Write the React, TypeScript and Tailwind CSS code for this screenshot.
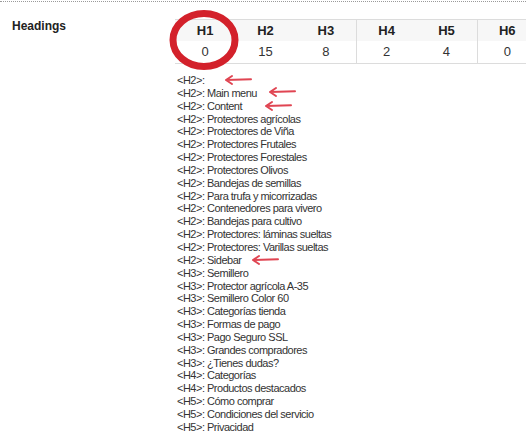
import React from "react";

const lines: string[] = [
  "<H2>: ",
  "<H2>: Main menu",
  "<H2>: Content",
  "<H2>: Protectores agrícolas",
  "<H2>: Protectores de Viña",
  "<H2>: Protectores Frutales",
  "<H2>: Protectores Forestales",
  "<H2>: Protectores Olivos",
  "<H2>: Bandejas de semillas",
  "<H2>: Para trufa y micorrizadas",
  "<H2>: Contenedores para vivero",
  "<H2>: Bandejas para cultivo",
  "<H2>: Protectores: láminas sueltas",
  "<H2>: Protectores: Varillas sueltas",
  "<H2>: Sidebar",
  "<H3>: Semillero",
  "<H3>: Protector agrícola A-35",
  "<H3>: Semillero Color 60",
  "<H3>: Categorías tienda",
  "<H3>: Formas de pago",
  "<H3>: Pago Seguro SSL",
  "<H3>: Grandes compradores",
  "<H3>: ¿Tienes dudas?",
  "<H4>: Categorías",
  "<H4>: Productos destacados",
  "<H5>: Cómo comprar",
  "<H5>: Condiciones del servicio",
  "<H5>: Privacidad",
];

const cols = [
  { h: "H1", v: "0", sep: false },
  { h: "H2", v: "15", sep: false },
  { h: "H3", v: "8", sep: false },
  { h: "H4", v: "2", sep: true },
  { h: "H5", v: "4", sep: false },
  { h: "H6", v: "0", sep: true },
];

function Arrow({ left, top }: { left: number; top: number }) {
  return (
    <svg
      className="absolute"
      style={{ left, top }}
      width="30"
      height="12"
      viewBox="0 0 30 12"
    >
      <path
        d="M2 6 L27 5.2 M8 2 L2 6 L8 10"
        fill="none"
        stroke="#e04552"
        strokeWidth="2"
        strokeLinecap="round"
        strokeLinejoin="round"
      />
    </svg>
  );
}

export default function App() {
  return (
    <div
      className="relative w-[526px] h-[435px] overflow-hidden bg-white text-[#333]"
      style={{ fontFamily: '"Liberation Sans", Arial, sans-serif' }}
    >
      <div className="border-t border-dotted border-[#9a9a9a] mt-[1px]" />
      <div className="flex">
        <div className="w-[175px] shrink-0 pl-[12px] pt-[15px] text-[12px] font-bold text-[#222]">
          Headings
        </div>
        <div className="flex-1 pt-[17px]">
          <div className="w-[362px] border-t border-b border-[#dcdcdc]">
            <div className="flex bg-[#f7f7f7] h-[21px]">
              {cols.map((c) => (
                <div
                  key={c.h}
                  className={
                    "w-[60.33px] flex items-center justify-center text-[13px] font-bold text-[#222] " +
                    (c.sep ? "border-l border-[#dcdcdc]" : "")
                  }
                >
                  {c.h}
                </div>
              ))}
            </div>
            <div className="flex h-[22px] bg-white">
              {cols.map((c) => (
                <div
                  key={c.h}
                  className={
                    "w-[60.33px] flex items-center justify-center text-[13px] text-[#333] " +
                    (c.sep ? "border-l border-[#dcdcdc]" : "")
                  }
                >
                  {c.v}
                </div>
              ))}
            </div>
          </div>
          <div className="pl-[2px] pt-[10px] text-[11px] leading-[12.85px] tracking-[-0.5px] text-[#333]">
            {lines.map((l, i) => (
              <div key={i} className="whitespace-pre">
                {l}
              </div>
            ))}
          </div>
        </div>
      </div>

      <svg
        className="absolute left-[164px] top-[6px]"
        width="80"
        height="68"
        viewBox="0 0 80 68"
      >
        <ellipse
          cx="40"
          cy="34"
          rx="31"
          ry="26.5"
          fill="none"
          stroke="#d3212b"
          strokeWidth="7"
        />
      </svg>

      <Arrow left={224} top={74} />
      <Arrow left={268} top={86} />
      <Arrow left={264} top={100} />
      <Arrow left={251} top={254} />
    </div>
  );
}
